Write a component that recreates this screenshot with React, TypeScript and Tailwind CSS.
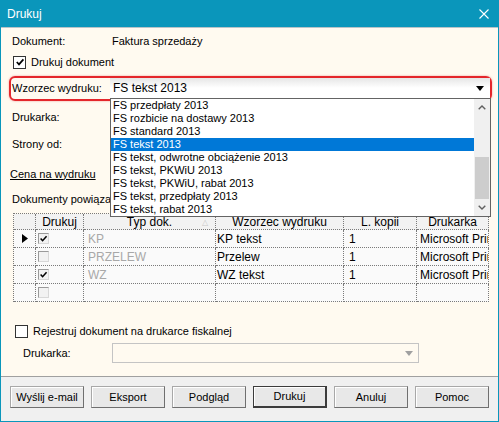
import type { ReactNode } from "react";

const templates = [
  "FS przedpłaty 2013",
  "FS rozbicie na dostawy 2013",
  "FS standard 2013",
  "FS tekst 2013",
  "FS tekst, odwrotne obciążenie 2013",
  "FS tekst, PKWiU 2013",
  "FS tekst, PKWiU, rabat 2013",
  "FS tekst, przedpłaty 2013",
  "FS tekst, rabat 2013",
];

const rows = [
  { current: true, print: true, type: "KP", template: "KP tekst", copies: "1", printer: "Microsoft Print to PDF" },
  { current: false, print: false, type: "PRZELEW", template: "Przelew", copies: "1", printer: "Microsoft Print to PDF" },
  { current: false, print: true, type: "WZ", template: "WZ tekst", copies: "1", printer: "Microsoft Print to PDF" },
  { current: false, print: false, type: "", template: "", copies: "", printer: "" },
];

function Check({ className = "" }: { className?: string }) {
  return (
    <svg viewBox="0 0 10 10" className={className} aria-hidden="true">
      <polyline points="1.8,5 4,7.4 8.4,2.4" fill="none" stroke="#000" strokeWidth="1.7" />
    </svg>
  );
}

function Cell({ children, className = "" }: { children?: ReactNode; className?: string }) {
  return (
    <div
      className={`flex items-center overflow-hidden whitespace-nowrap border-b border-r border-dotted border-[#7a7a7a] ${className}`}
    >
      {children}
    </div>
  );
}

function Button({ label, primary = false }: { label: string; primary?: boolean }) {
  return (
    <button
      className={`flex h-[22px] w-[74px] items-center justify-center border bg-[#e8e8e8] text-[11px] text-black shadow-[inset_1px_1px_0_#ffffff] ${
        primary
          ? "border-[#3c3c3c] border-b-2 border-r-2"
          : "border-[#a8a8a8] border-b-[#6f6f6f] border-r-[#6f6f6f]"
      }`}
    >
      {label}
    </button>
  );
}

export default function App() {
  return (
    <div className="flex h-[422px] w-[499px] flex-col border border-[#0a96bb] font-['Liberation_Sans',Arial,sans-serif] text-[11px] text-black">
      {/* title bar */}
      <div className="flex h-[26px] items-center justify-between bg-[#0a96bb] pl-[6px] pr-[9px] text-[12px] text-white">
        <span>Drukuj</span>
        <svg viewBox="0 0 10 10" className="size-[10px]" aria-hidden="true">
          <path d="M0.5 0.5L9.5 9.5M9.5 0.5L0.5 9.5" stroke="#fff" strokeWidth="1.1" />
        </svg>
      </div>

      {/* body */}
      <div className="flex flex-1 flex-col border-t border-[#b8c4c8] bg-[#fffaf0] pl-[11px] pt-[6px]">
        <div className="flex h-[14px] items-center">
          <span className="w-[100px]">Dokument:</span>
          <span>Faktura sprzedaży</span>
        </div>

        <div className="ml-[1px] mt-[7px] flex h-[14px] items-center gap-[5px]">
          <span className="flex size-[13px] items-center justify-center border border-[#333] bg-white">
            <Check className="size-[10px]" />
          </span>
          <span>Drukuj dokument</span>
        </div>

        <div className="relative -ml-[3px] mt-[7px] flex h-[25px] w-[483px] items-center rounded-[6px] border-2 border-[#e4262b] shadow-[0_0_2px_rgba(228,38,43,0.5)]">
          <span className="w-[99px] pl-[1px]">Wzorzec wydruku:</span>
          <div className="relative flex h-[21px] flex-1 items-center justify-between border-b border-[#9a9a9a] bg-gradient-to-b from-[#e6e6e6] via-white to-white pl-[3px] pr-[6px] text-[12px]">
            <span>FS tekst 2013</span>
            <svg viewBox="0 0 8 5" className="h-[5px] w-[8px]" aria-hidden="true">
              <path d="M0 0H8L4 5Z" fill="#000" />
            </svg>

            {/* open dropdown list */}
            <div className="absolute left-0 top-full z-10 flex h-[119px] w-[381px] border border-[#646464] bg-white text-[11px]">
              <div className="flex-1">
                {templates.map((item) => (
                  <div
                    key={item}
                    className={`h-[13px] whitespace-nowrap pl-[2px] leading-[13px] ${
                      item === "FS tekst 2013" ? "bg-[#0078d7] text-white" : ""
                    }`}
                  >
                    {item}
                  </div>
                ))}
              </div>
              <div className="flex w-[16px] flex-col bg-[#f0f0f0]">
                <div className="flex h-[17px] items-center justify-center">
                  <svg viewBox="0 0 8 5" className="h-[5px] w-[8px]" aria-hidden="true">
                    <path d="M0.7 4.3L4 1L7.3 4.3" fill="none" stroke="#606060" strokeWidth="1.4" />
                  </svg>
                </div>
                <div className="mx-[1px] mt-[41px] h-[42px] bg-[#cdcdcd]" />
                <div className="flex-1" />
                <div className="flex h-[17px] items-center justify-center">
                  <svg viewBox="0 0 8 5" className="h-[5px] w-[8px]" aria-hidden="true">
                    <path d="M0.7 0.7L4 4L7.3 0.7" fill="none" stroke="#606060" strokeWidth="1.4" />
                  </svg>
                </div>
              </div>
            </div>
          </div>
        </div>

        <div className="mt-[9px] flex h-[14px] items-center">Drukarka:</div>
        <div className="mt-[13px] flex h-[14px] items-center">Strony od:</div>
        <div className="-ml-[2px] mt-[16px] flex h-[14px] items-center underline">Cena na wydruku</div>
        <div className="mt-[11px] flex h-[14px] items-center">Dokumenty powiązane</div>

        {/* linked documents grid */}
        <div className="ml-[1px] mt-[7px] grid w-[476px] grid-cols-[22px_48px_132px_128px_73px_72px] border-l border-t border-dotted border-[#7a7a7a]">
          <Cell className="h-[16px] bg-[#f2f2f2]" />
          <Cell className="h-[16px] justify-center bg-[#f2f2f2] text-[12px]">Drukuj</Cell>
          <Cell className="relative h-[16px] justify-center bg-[#f2f2f2] text-[12px]">
            Typ dok.
            <span className="absolute right-[7px] top-[3px] text-[8px] text-[#c8c8c8]">△</span>
          </Cell>
          <Cell className="h-[16px] justify-center bg-[#f2f2f2] text-[12px]">Wzorzec wydruku</Cell>
          <Cell className="h-[16px] justify-center bg-[#f2f2f2] text-[12px]">L. kopii</Cell>
          <Cell className="h-[16px] justify-center bg-[#f2f2f2] text-[12px]">Drukarka</Cell>

          {rows.map((row, i) => (
            <div key={i} className="contents">
              <Cell className="h-[18px] justify-center bg-[#fafafa]">
                {row.current ? (
                  <svg viewBox="0 0 6 9" className="h-[9px] w-[6px]" aria-hidden="true">
                    <path d="M0 0L6 4.5L0 9Z" fill="#000" />
                  </svg>
                ) : null}
              </Cell>
              <Cell className="h-[18px] bg-[#fafafa] pl-[2px]">
                <span className="flex size-[11px] items-center justify-center border border-[#9a9a9a] border-b-[#d8d8d8] border-r-[#d8d8d8] bg-[#f2f2f2]">
                  {row.print ? <Check className="size-[9px]" /> : null}
                </span>
              </Cell>
              <Cell className="h-[18px] bg-[#fafafa] pl-[4px] text-[12px] text-[#a8a8a8]">{row.type}</Cell>
              <Cell className="h-[18px] bg-[#fafafa] pl-[1px] text-[12px]">{row.template}</Cell>
              <Cell className="h-[18px] bg-[#fafafa] pl-[5px] text-[12px]">{row.copies}</Cell>
              <Cell className="h-[18px] bg-[#fafafa] pl-[3px] text-[12px]">{row.printer}</Cell>
            </div>
          ))}
        </div>

        <div className="ml-[3px] mt-[22px] flex h-[14px] items-center gap-[5px]">
          <span className="size-[13px] border border-[#333] bg-white" />
          <span>Rejestruj dokument na drukarce fiskalnej</span>
        </div>

        <div className="mt-[5px] flex h-[20px] items-center">
          <span className="w-[100px] pl-[11px]">Drukarka:</span>
          <div className="flex h-[20px] w-[307px] items-center justify-end border border-[#c4c4c4] pr-[5px]">
            <svg viewBox="0 0 8 5" className="h-[5px] w-[8px]" aria-hidden="true">
              <path d="M0 0H8L4 5Z" fill="#a0a0a0" />
            </svg>
          </div>
        </div>
      </div>

      {/* button bar */}
      <div className="flex h-[45px] gap-[7px] border-t border-[#a0a0a0] bg-[#f0f0f0] pl-[9px] pt-[9px]">
        <Button label="Wyślij e-mail" />
        <Button label="Eksport" />
        <Button label="Podgląd" />
        <Button label="Drukuj" primary />
        <Button label="Anuluj" />
        <Button label="Pomoc" />
      </div>
    </div>
  );
}
